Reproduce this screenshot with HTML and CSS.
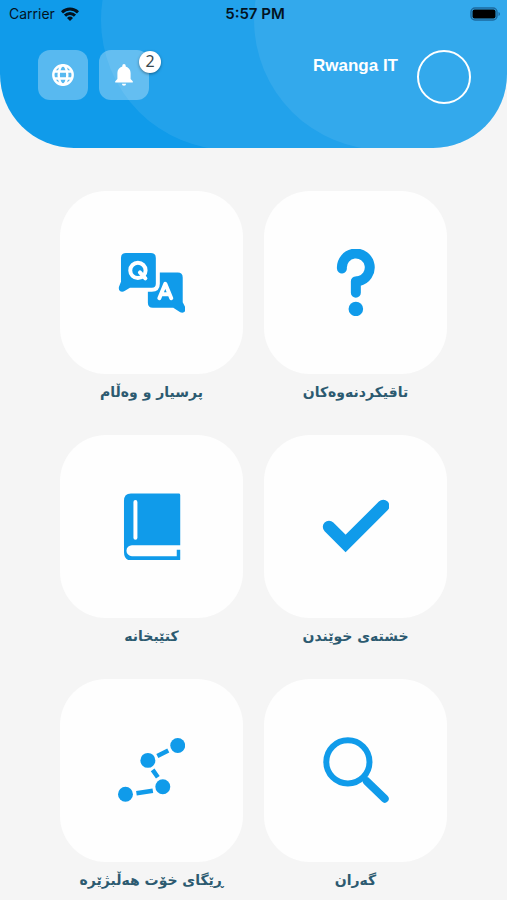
FILE: index.html
```html
<!DOCTYPE html>
<html lang="ckb">
<head>
<meta charset="utf-8">
<meta name="viewport" content="width=device-width, initial-scale=1">
<title>Rwanga IT</title>
<link rel="stylesheet" href="styles.css">
</head>
<body>
<header class="hero">
  <div class="status">
    <div class="carrier">
      <span>Carrier</span>
      <svg width="18" height="14" viewBox="0 0 18 14" fill="none" stroke="#03131f" stroke-width="3" aria-hidden="true">
        <path d="M1 5.300a11.500 11.500 0 0 1 16 0M4 8.600a7 7 0 0 1 10 0"/>
        <path d="M9 14L6 11a4.300 4.300 0 0 1 6 0z" fill="#03131f" stroke="none"/>
      </svg>
    </div>
    <span class="time">5:57 PM</span>
    <svg class="battery" width="31" height="14" viewBox="0 0 31 14" aria-hidden="true">
      <rect x="1" y="1" width="26" height="12" rx="4" fill="none" stroke="#1d6a9f" stroke-width="1.500"/>
      <rect x="2.500" y="2.500" width="23" height="9" rx="2" fill="#000"/>
      <path d="M28.500 5v4q1.500-.5 1.500-2t-1.500-2" fill="#1d6a9f"/>
    </svg>
  </div>
  <div class="toolbar">
    <button class="tool" type="button" aria-label="Language">
      <svg width="22" height="22" viewBox="0 0 22 22" fill="none" stroke="#fff" stroke-width="2.400" aria-hidden="true">
        <circle cx="11" cy="11" r="9.700"/>
        <ellipse cx="11" cy="11" rx="4.300" ry="9.700"/>
        <path d="M2 7.500h18M2 14.500h18"/>
      </svg>
    </button>
    <button class="tool" type="button" aria-label="Notifications">
      <svg width="18" height="22" viewBox="0 0 18 22" fill="#fff" aria-hidden="true">
        <path d="M9 0a1.700 1.700 0 0 0-1.700 1.700v.7C4.200 3.200 2.400 5.800 2.400 9v6L.2 17.200v1.300h17.600v-1.300L15.600 15V9c0-3.200-1.800-5.800-4.900-6.600v-.7A1.700 1.700 0 0 0 9 0zM6.900 19.700a2.100 2.100 0 0 0 4.200 0z"/>
      </svg>
      <span class="badge">2</span>
    </button>
    <span class="name">Rwanga IT</span>
    <a class="avatar" href="#" aria-label="Profile"></a>
  </div>
</header>

<main class="menu" dir="rtl">
  <a class="item" href="#">
    <span class="tile">
      <svg class="icon" viewBox="0 0 68 68" aria-hidden="true">
        <path d="M20 19.500A14 14 0 1 1 37 32.200Q34 32.500 34 33V44M34 44V32.500" fill="none" stroke="currentColor" stroke-width="10" stroke-linecap="round" stroke-linejoin="round"/>
        <circle cx="34" cy="60.200" r="7.300" fill="currentColor"/>
      </svg>
    </span>
    <span class="label">تاقیکردنەوەکان</span>
  </a>
  <a class="item" href="#">
    <span class="tile">
      <svg class="icon" viewBox="0 0 68 68" fill="currentColor" aria-hidden="true">
        <path d="M8 4h25q5 0 5 5v26q0 4-4 4H12l-5 3c-4 2.500-7-.5-6-4l2-5V9q0-5 5-5z"/>
        <path d="M42 23.500h18q5 0 5 5v25l2.500 5c1.500 4-1.500 6.500-5 5l-7-4.500H35q-5 0-5-5V43h4q8 0 8-8z"/>
        <g fill="none" stroke="#fff" stroke-width="4" stroke-linecap="round" stroke-linejoin="round">
          <circle cx="20" cy="21.500" r="7.700"/>
          <path d="M22 23.500l5.500 6M41.500 49.500l6-14.500 6 14.500M44 45.500h7"/>
        </g>
      </svg>
    </span>
    <span class="label">پرسیار و وەڵام</span>
  </a>
  <a class="item" href="#">
    <span class="tile">
      <svg class="icon" viewBox="0 0 68 68" fill="none" stroke="currentColor" aria-hidden="true">
        <path d="M7 34l16.700 16.700L61.500 13" stroke-width="12.400" stroke-linecap="round"/>
      </svg>
    </span>
    <span class="label">خشتەی خوێندن</span>
  </a>
  <a class="item" href="#">
    <span class="tile">
      <svg class="icon" viewBox="0 0 68 68" aria-hidden="true">
        <path d="M13 .5h48q1.500 0 1.500 1.500v50.500H14a5 5 0 0 0 0 11H59V57h3.500v9.500q0 1.500-1.500 1.500H14Q6 68 6 59V8Q6 .5 13 .5z" fill="currentColor"/>
        <path d="M17.500 9v36" stroke="#fff" stroke-width="4" stroke-linecap="round"/>
      </svg>
    </span>
    <span class="label">کتێبخانە</span>
  </a>
  <a class="item" href="#">
    <span class="tile">
      <svg class="icon" viewBox="0 0 68 68" fill="none" stroke="currentColor" aria-hidden="true">
        <circle cx="26" cy="25" r="21.700" stroke-width="6"/>
        <path d="M45 44.500l18 17.500" stroke-width="8" stroke-linecap="round"/>
        <path d="M41 40l5 5" stroke-width="4"/>
      </svg>
    </span>
    <span class="label">گەران</span>
  </a>
  <a class="item" href="#">
    <span class="tile">
      <svg class="icon" viewBox="0 0 68 68" fill="currentColor" aria-hidden="true">
        <circle cx="60" cy="8.500" r="7.500"/>
        <circle cx="30" cy="23.500" r="7.500"/>
        <circle cx="45" cy="50" r="7.500"/>
        <circle cx="7.500" cy="57.500" r="7.500"/>
        <path d="M50.500 13.500l-11 5.500M34.800 33l5.200 7.500M35 54l-16.500 2.500" fill="none" stroke="currentColor" stroke-width="4.500"/>
      </svg>
    </span>
    <span class="label">ڕێگای خۆت هەڵبژێرە</span>
  </a>
</main>
</body>
</html>
```
FILE: styles.css
```css
* {
  box-sizing: border-box;
}

body {
  margin: 0;
  min-height: 100vh;
  background: #f5f5f5;
  font-family: "Liberation Sans", Arial, sans-serif;
}

.hero {
  position: relative;
  overflow: hidden;
  isolation: isolate;
  padding-bottom: 44px;
  border-radius: 0 0 74px 74px;
  background: #109bea;
}

/* Overlapping translucent curves behind the header content */
.hero::before,
.hero::after {
  content: "";
  position: absolute;
  z-index: -1;
  top: -110px;
  bottom: -2px;
  right: -130px;
  left: 20%;
  border-radius: 130px;
  background: rgba(255, 255, 255, 0.08);
}

.hero::after {
  left: 50%;
}

.status {
  display: grid;
  grid-template-columns: 1fr auto 1fr;
  align-items: center;
  height: 27px;
  padding: 0 6px 0 9px;
  color: #03131f;
  font-family: Inter, sans-serif;
  font-size: 14px;
}

.carrier {
  display: flex;
  align-items: center;
  gap: 6px;
}

.time {
  font-size: 15px;
  font-weight: 600;
}

.battery {
  justify-self: end;
}

.toolbar {
  display: flex;
  align-items: flex-start;
  gap: 11px;
  margin-top: 23px;
  padding: 0 36px 0 38px;
}

.tool {
  position: relative;
  display: grid;
  place-items: center;
  width: 50px;
  height: 50px;
  padding: 0;
  border: 0;
  border-radius: 12px;
  background: rgba(255, 255, 255, 0.3);
}

.badge {
  position: absolute;
  top: 1px;
  right: -12px;
  width: 22px;
  height: 22px;
  border-radius: 50%;
  background: #fff;
  box-shadow: 0 1px 3px rgba(0, 0, 0, 0.4);
  color: #37474f;
  font: 16px/20px "Noto Sans", sans-serif;
  text-align: center;
}

.name {
  margin: 6px 8px 0 auto;
  color: #fff;
  font-size: 17px;
  font-weight: 700;
  line-height: 20px;
}

.avatar {
  width: 54px;
  height: 54px;
  border: 2px solid #fff;
  border-radius: 50%;
}

.menu {
  display: grid;
  grid-template-columns: 1fr 1fr;
  gap: 21px;
  padding: 43px 60px 0;
}

.item {
  color: #2c5a70;
  text-align: center;
  text-decoration: none;
}

.tile {
  display: grid;
  place-items: center;
  aspect-ratio: 1;
  border-radius: 46px;
  background: #fefefe;
  color: #109bea;
}

.icon {
  width: 37%;
}

.label {
  display: block;
  height: 40px;
  font-family: "DejaVu Sans", sans-serif;
  font-size: 14px;
  font-weight: 700;
  line-height: 36px;
  white-space: nowrap;
}
```
